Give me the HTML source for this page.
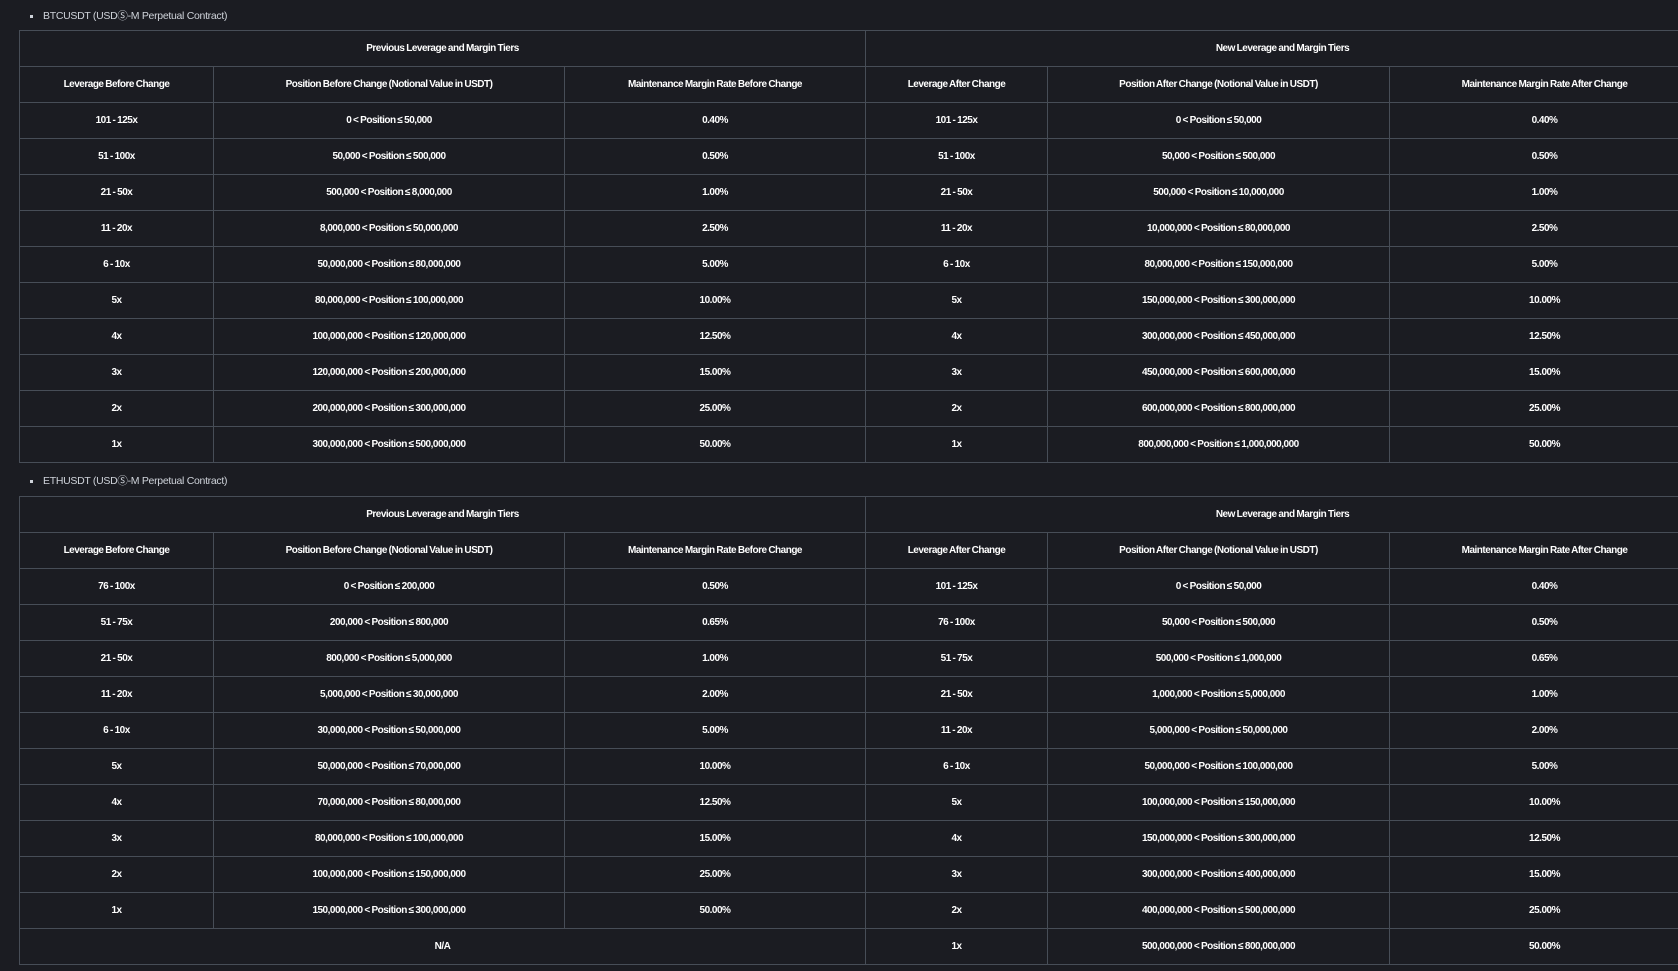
<!DOCTYPE html>
<html><head><meta charset="utf-8"><style>
html,body{margin:0;padding:0;background:#1b1c22;width:1678px;height:971px;overflow:hidden;font-family:"Liberation Sans Narrow","Liberation Sans",sans-serif;}
.b{position:absolute;left:30px;color:#cfd3da;font-size:10.5px;letter-spacing:-0.3px;font-family:"Liberation Sans",sans-serif;}
.b:before{content:"";display:inline-block;width:3px;height:3px;background:#cfd3da;margin-right:10px;vertical-align:middle;}
table{position:absolute;left:19px;width:1680px;border-collapse:collapse;table-layout:fixed;}
td{border:1px solid #474d57;height:35px;padding:0;text-align:center;color:#fff;font-weight:bold;font-size:10px;letter-spacing:-0.5px;word-spacing:-0.5px;}
</style></head><body>
<div class="b" style="top:8px">BTCUSDT (USDⓈ-M Perpetual Contract)</div>
<table style="top:30px">
<colgroup><col style="width:194px"><col style="width:351px"><col style="width:301px"><col style="width:182px"><col style="width:342px"><col style="width:310px"></colgroup>
<tr><td colspan="3">Previous Leverage and Margin Tiers</td><td colspan="3">New Leverage and Margin Tiers</td></tr>
<tr><td>Leverage Before Change</td><td>Position Before Change (Notional Value in USDT)</td><td>Maintenance Margin Rate Before Change</td><td>Leverage After Change</td><td>Position After Change (Notional Value in USDT)</td><td>Maintenance Margin Rate After Change</td></tr>
<tr><td>101 - 125x</td><td>0 &lt; Position ≤ 50,000</td><td>0.40%</td><td>101 - 125x</td><td>0 &lt; Position ≤ 50,000</td><td>0.40%</td></tr>
<tr><td>51 - 100x</td><td>50,000 &lt; Position ≤ 500,000</td><td>0.50%</td><td>51 - 100x</td><td>50,000 &lt; Position ≤ 500,000</td><td>0.50%</td></tr>
<tr><td>21 - 50x</td><td>500,000 &lt; Position ≤ 8,000,000</td><td>1.00%</td><td>21 - 50x</td><td>500,000 &lt; Position ≤ 10,000,000</td><td>1.00%</td></tr>
<tr><td>11 - 20x</td><td>8,000,000 &lt; Position ≤ 50,000,000</td><td>2.50%</td><td>11 - 20x</td><td>10,000,000 &lt; Position ≤ 80,000,000</td><td>2.50%</td></tr>
<tr><td>6 - 10x</td><td>50,000,000 &lt; Position ≤ 80,000,000</td><td>5.00%</td><td>6 - 10x</td><td>80,000,000 &lt; Position ≤ 150,000,000</td><td>5.00%</td></tr>
<tr><td>5x</td><td>80,000,000 &lt; Position ≤ 100,000,000</td><td>10.00%</td><td>5x</td><td>150,000,000 &lt; Position ≤ 300,000,000</td><td>10.00%</td></tr>
<tr><td>4x</td><td>100,000,000 &lt; Position ≤ 120,000,000</td><td>12.50%</td><td>4x</td><td>300,000,000 &lt; Position ≤ 450,000,000</td><td>12.50%</td></tr>
<tr><td>3x</td><td>120,000,000 &lt; Position ≤ 200,000,000</td><td>15.00%</td><td>3x</td><td>450,000,000 &lt; Position ≤ 600,000,000</td><td>15.00%</td></tr>
<tr><td>2x</td><td>200,000,000 &lt; Position ≤ 300,000,000</td><td>25.00%</td><td>2x</td><td>600,000,000 &lt; Position ≤ 800,000,000</td><td>25.00%</td></tr>
<tr><td>1x</td><td>300,000,000 &lt; Position ≤ 500,000,000</td><td>50.00%</td><td>1x</td><td>800,000,000 &lt; Position ≤ 1,000,000,000</td><td>50.00%</td></tr>
</table>
<div class="b" style="top:473px">ETHUSDT (USDⓈ-M Perpetual Contract)</div>
<table style="top:496px">
<colgroup><col style="width:194px"><col style="width:351px"><col style="width:301px"><col style="width:182px"><col style="width:342px"><col style="width:310px"></colgroup>
<tr><td colspan="3">Previous Leverage and Margin Tiers</td><td colspan="3">New Leverage and Margin Tiers</td></tr>
<tr><td>Leverage Before Change</td><td>Position Before Change (Notional Value in USDT)</td><td>Maintenance Margin Rate Before Change</td><td>Leverage After Change</td><td>Position After Change (Notional Value in USDT)</td><td>Maintenance Margin Rate After Change</td></tr>
<tr><td>76 - 100x</td><td>0 &lt; Position ≤ 200,000</td><td>0.50%</td><td>101 - 125x</td><td>0 &lt; Position ≤ 50,000</td><td>0.40%</td></tr>
<tr><td>51 - 75x</td><td>200,000 &lt; Position ≤ 800,000</td><td>0.65%</td><td>76 - 100x</td><td>50,000 &lt; Position ≤ 500,000</td><td>0.50%</td></tr>
<tr><td>21 - 50x</td><td>800,000 &lt; Position ≤ 5,000,000</td><td>1.00%</td><td>51 - 75x</td><td>500,000 &lt; Position ≤ 1,000,000</td><td>0.65%</td></tr>
<tr><td>11 - 20x</td><td>5,000,000 &lt; Position ≤ 30,000,000</td><td>2.00%</td><td>21 - 50x</td><td>1,000,000 &lt; Position ≤ 5,000,000</td><td>1.00%</td></tr>
<tr><td>6 - 10x</td><td>30,000,000 &lt; Position ≤ 50,000,000</td><td>5.00%</td><td>11 - 20x</td><td>5,000,000 &lt; Position ≤ 50,000,000</td><td>2.00%</td></tr>
<tr><td>5x</td><td>50,000,000 &lt; Position ≤ 70,000,000</td><td>10.00%</td><td>6 - 10x</td><td>50,000,000 &lt; Position ≤ 100,000,000</td><td>5.00%</td></tr>
<tr><td>4x</td><td>70,000,000 &lt; Position ≤ 80,000,000</td><td>12.50%</td><td>5x</td><td>100,000,000 &lt; Position ≤ 150,000,000</td><td>10.00%</td></tr>
<tr><td>3x</td><td>80,000,000 &lt; Position ≤ 100,000,000</td><td>15.00%</td><td>4x</td><td>150,000,000 &lt; Position ≤ 300,000,000</td><td>12.50%</td></tr>
<tr><td>2x</td><td>100,000,000 &lt; Position ≤ 150,000,000</td><td>25.00%</td><td>3x</td><td>300,000,000 &lt; Position ≤ 400,000,000</td><td>15.00%</td></tr>
<tr><td>1x</td><td>150,000,000 &lt; Position ≤ 300,000,000</td><td>50.00%</td><td>2x</td><td>400,000,000 &lt; Position ≤ 500,000,000</td><td>25.00%</td></tr>
<tr><td colspan="3">N/A</td><td>1x</td><td>500,000,000 &lt; Position ≤ 800,000,000</td><td>50.00%</td></tr>
</table>
</body></html>
